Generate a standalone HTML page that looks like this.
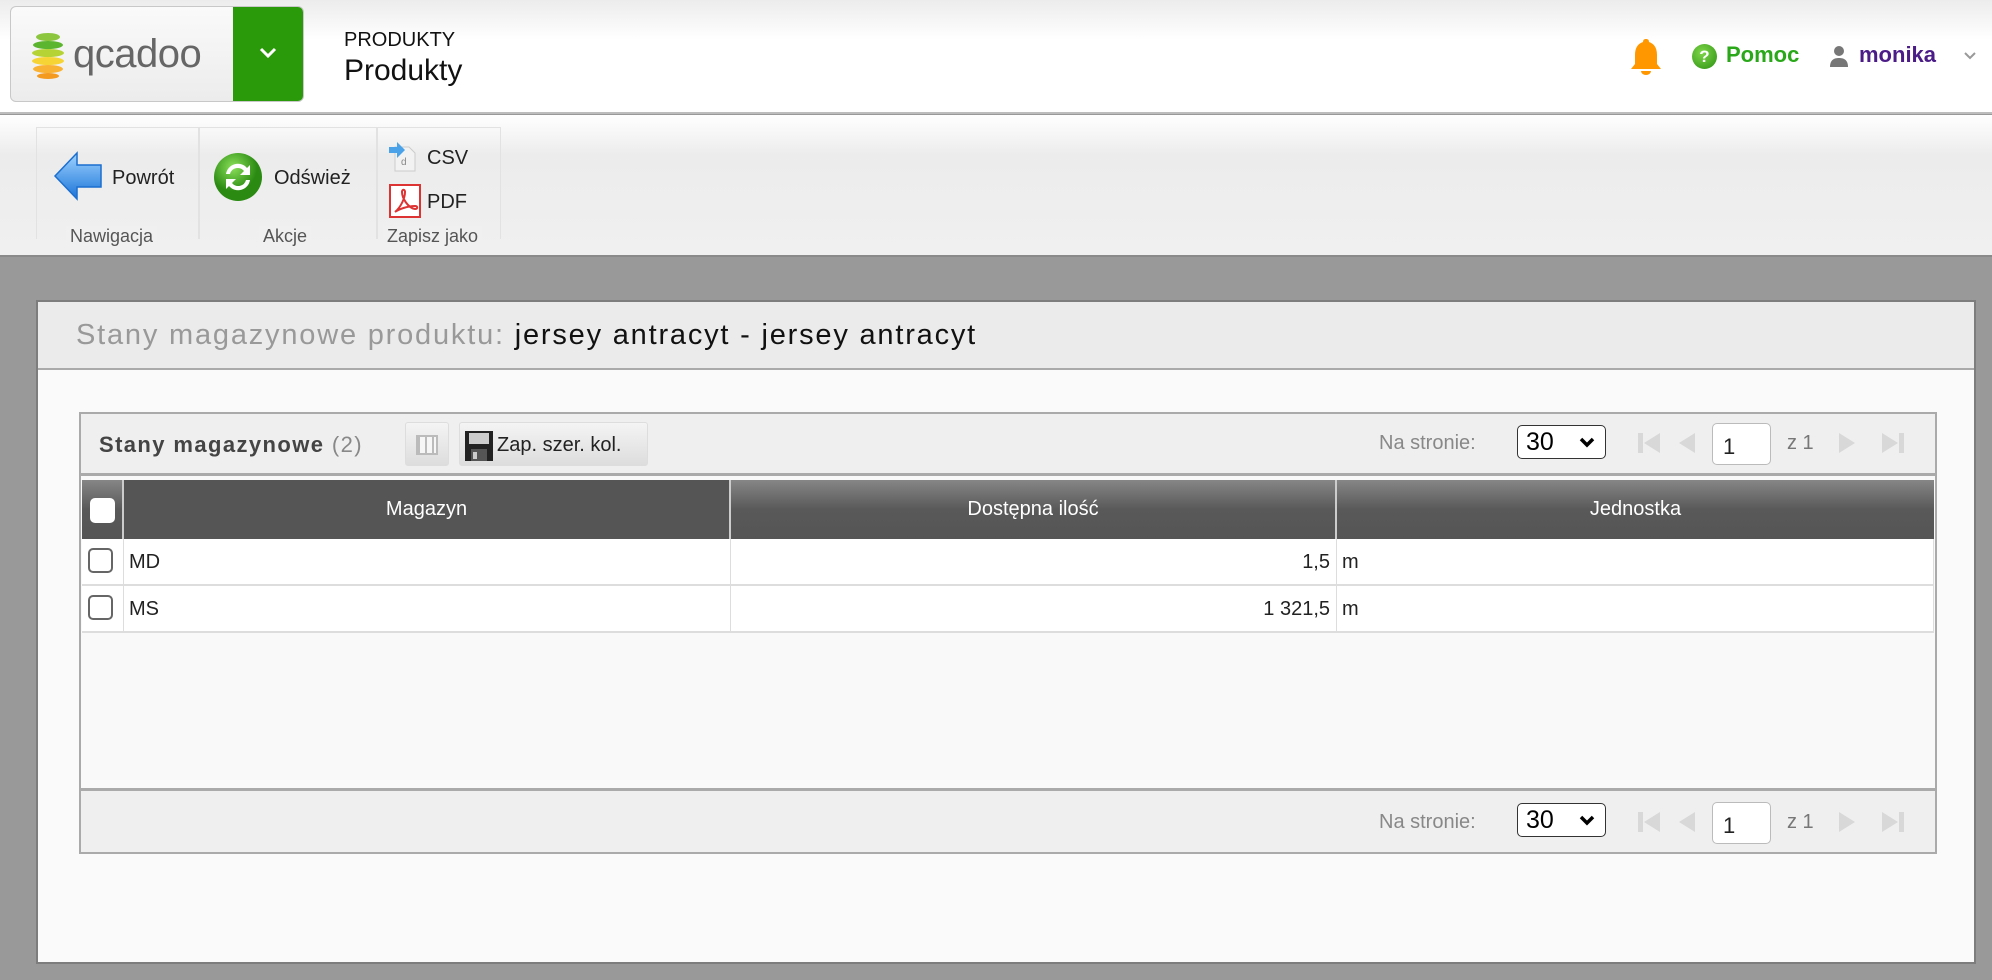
<!DOCTYPE html>
<html><head><meta charset="utf-8"><style>
*{box-sizing:border-box;margin:0;padding:0}
body{width:1992px;height:980px;overflow:hidden;font-family:"Liberation Sans",sans-serif;background:#999;position:relative}
.abs{position:absolute}
#hdr{left:0;top:0;width:1992px;height:114px;background:linear-gradient(#ececec,#fff 40px);border-bottom:2px solid #bdbdbd}
#logo{left:10px;top:6px;width:294px;height:96px;border:1px solid #c8c8c8;border-radius:6px;background:linear-gradient(#fafafa,#ececec);overflow:hidden}
#logo .g{position:absolute;right:0;top:0;width:70px;height:100%;background:#2a9a0a}
#tb{left:0;top:115px;width:1992px;height:140px;background:linear-gradient(#fff,#ececec 40px,#f0f0f0)}
.grp{position:absolute;top:12px;height:112px;border:1px solid #e2e2e2;border-bottom:none}
.lbl{position:absolute;top:111px;font-size:18px;color:#555;background:#f0f0f0;padding:0 4px}
.btxt{font-size:20px;color:#222}
#panel{left:36px;top:300px;width:1940px;height:664px;background:#fafafa;border:2px solid #7d7d7d}
#ph{left:0;top:0;width:100%;height:68px;background:#ebebeb;border-bottom:2px solid #aaa}
#grid{left:41px;top:110px;width:1858px;height:442px;border:2px solid #aaa;background:#f9f9f9}
.bar{position:absolute;left:0;width:100%;height:62px;background:#efefef}
.th{position:absolute;top:0;height:59px;background:linear-gradient(#868686,#595959 50%,#555);color:#fff;font-size:20px;text-align:center;line-height:59px;border-right:2px solid #ccc}
.cell{position:absolute;height:47px;border-right:1px solid #ddd;border-bottom:2px solid #ddd;background:#fff;font-size:20px;line-height:47px;color:#222}
.cb{position:absolute;width:25px;height:25px;border:2px solid #666;border-radius:5px;background:#fff}
.pg{font-size:20px;color:#888}
.sel{position:absolute;width:89px;height:34px;border:1px solid #333;border-radius:5px;background:#fff;font-size:25px;color:#000;padding-left:8px;line-height:32px}
.inp{position:absolute;width:59px;height:42px;border:1px solid #bbb;border-radius:5px;background:#fff;font-size:22px;padding:10px 0 0 10px;color:#222}
</style></head><body>
<div id="hdr" class="abs">
 <div id="logo" class="abs">
  <svg class="abs" style="left:20px;top:24px" width="34" height="48" viewBox="0 0 34 48">
   <ellipse cx="17" cy="6" rx="12" ry="4" fill="#8cc63f"/><ellipse cx="17" cy="14" rx="15" ry="4" fill="#5bb52e"/><ellipse cx="17" cy="22" rx="16" ry="4" fill="#b5d335"/><ellipse cx="17" cy="30" rx="16" ry="4" fill="#f7d436"/><ellipse cx="17" cy="38" rx="15" ry="4" fill="#f9b233"/><ellipse cx="17" cy="45" rx="11" ry="3" fill="#f39a1f"/>
  </svg>
  <div class="abs" style="left:62px;top:25px;font-size:40px;color:#666;letter-spacing:-0.5px">qcadoo</div>
  <div class="g"><svg class="abs" style="left:26px;top:40px" width="18" height="12" viewBox="0 0 18 12"><path d="M2 2l7 7 7-7" stroke="#fff" stroke-width="3" fill="none"/></svg></div>
 </div>
 <div class="abs" style="left:344px;top:29px;font-size:20px;color:#111">PRODUKTY</div>
 <div class="abs" style="left:344px;top:54px;font-size:30px;color:#111">Produkty</div>
 <svg class="abs" style="left:1629px;top:37px" width="34" height="40" viewBox="0 0 34 40"><path d="M17 2c-2 0-3 1-3 3C8 7 6 12 6 18v9l-4 5h30l-4-5v-9c0-6-2-11-8-13 0-2-1-3-3-3z" fill="#ff9800"/><path d="M12 34h10a5 4 0 0 1-10 0z" fill="#ff9800"/></svg>
 <div class="abs" style="left:1692px;top:44px;width:25px;height:25px;border-radius:50%;background:radial-gradient(circle at 40% 35%,#7fd64a,#2a8f10);color:#fff;font-size:17px;font-weight:bold;text-align:center;line-height:25px">?</div>
 <div class="abs" style="left:1726px;top:42px;font-size:22px;font-weight:bold;color:#2aa81a">Pomoc</div>
 <svg class="abs" style="left:1829px;top:45px" width="20" height="22" viewBox="0 0 20 22"><circle cx="10" cy="6" r="5" fill="#777"/><path d="M1 22c0-7 4-9 9-9s9 2 9 9z" fill="#777"/></svg>
 <div class="abs" style="left:1859px;top:42px;font-size:22px;font-weight:bold;color:#4b1c87">monika</div>
 <svg class="abs" style="left:1964px;top:52px" width="12" height="8" viewBox="0 0 12 8"><path d="M1 1l5 5 5-5" stroke="#999" stroke-width="2" fill="none"/></svg>
</div>
<div id="tb" class="abs">
 <div class="grp" style="left:36px;width:163px"></div>
 <div class="lbl" style="left:66px">Nawigacja</div>
 <div class="grp" style="left:199px;width:178px"></div>
 <div class="lbl" style="left:259px">Akcje</div>
 <div class="grp" style="left:377px;width:124px"></div>
 <div class="lbl" style="left:383px">Zapisz jako</div>
 <svg class="abs" style="left:53px;top:36px" width="50" height="50" viewBox="0 0 50 50"><defs><linearGradient id="ab" x1="0" y1="0" x2="0" y2="1"><stop offset="0" stop-color="#9fd3ff"/><stop offset="1" stop-color="#1a73d8"/></linearGradient></defs><path d="M2 25L24 2v12h24v22H24v12z" fill="url(#ab)" stroke="#1b6fd0" stroke-width="1.5"/></svg>
 <div class="abs btxt" style="left:112px;top:52px">Powrót</div>
 <svg class="abs" style="left:213px;top:37px" width="50" height="50" viewBox="0 0 50 50"><defs><radialGradient id="gg" cx=".4" cy=".3"><stop offset="0" stop-color="#8be05a"/><stop offset="1" stop-color="#2a8a12"/></radialGradient></defs><circle cx="25" cy="25" r="24" fill="url(#gg)"/><path d="M13 22a12 12 0 0 1 21-6l3-3v10H27l4-4a8 8 0 0 0-14 3z M37 28a12 12 0 0 1-21 6l-3 3V27h10l-4 4a8 8 0 0 0 14-3z" fill="#fff"/></svg>
 <div class="abs btxt" style="left:274px;top:52px">Odśwież</div>
 <svg class="abs" style="left:389px;top:26px" width="30" height="32" viewBox="0 0 30 32"><path d="M6 6h14l6 6v18H6z" fill="#f2f2f2" stroke="#ccc"/><text x="12" y="24" font-size="10" fill="#888" font-family="Liberation Sans">d</text><path d="M0 6h8V1l8 8-8 8v-5H0z" fill="#4aa3e8"/></svg>
 <div class="abs btxt" style="left:427px;top:32px">CSV</div>
 <svg class="abs" style="left:389px;top:69px" width="32" height="34" viewBox="0 0 32 34"><rect x="1" y="1" width="30" height="32" fill="#fff" stroke="#d33" stroke-width="2"/><path d="M6 28c6-5 10-14 10-20 0-3-3-3-3 0 0 6 6 16 13 17 3 0 3-3 0-3-7 0-16 3-20 6z" fill="none" stroke="#d33" stroke-width="2"/></svg>
 <div class="abs btxt" style="left:427px;top:76px">PDF</div>
</div>
<div class="abs" style="left:0;top:255px;width:1992px;height:2px;background:#8a8a8a"></div>
<div id="panel" class="abs">
 <div id="ph" class="abs"><div class="abs" style="left:38px;top:17px;font-size:29px;color:#999;white-space:nowrap;letter-spacing:1.8px">Stany magazynowe produktu: <span style="color:#111">jersey antracyt - jersey antracyt</span></div></div>
 <div id="grid" class="abs">
  <div class="bar" style="top:0;border-bottom:3px solid #aaa">
   <div class="abs" style="left:18px;top:18px;font-size:22px;font-weight:bold;color:#444;letter-spacing:1.4px">Stany magazynowe <span style="font-weight:normal;color:#888">(2)</span></div>
   <div class="abs" style="left:324px;top:8px;width:44px;height:44px;border:1px solid #ddd;border-radius:3px;background:linear-gradient(#f4f4f4,#ddd)"><div class="abs" style="left:10px;top:12px;width:22px;height:20px;border:2px solid #bbb;background:repeating-linear-gradient(90deg,#bbb 0 2px,#f6f6f6 2px 7px)"></div></div>
   <div class="abs" style="left:378px;top:8px;width:189px;height:44px;border:1px solid #ddd;border-radius:3px;background:linear-gradient(#f4f4f4,#ddd)">
    <svg class="abs" style="left:5px;top:8px" width="28" height="30" viewBox="0 0 28 30"><rect width="28" height="30" fill="#222"/><rect x="4" y="2" width="20" height="11" fill="#ccc"/><rect x="6" y="18" width="16" height="12" fill="#555"/><rect x="8" y="21" width="4" height="7" fill="#ccc"/></svg>
    <div class="abs" style="left:37px;top:11px;font-size:20px;color:#222">Zap. szer. kol.</div>
   </div>
   <div class="abs pg" style="left:1298px;top:18px">Na stronie:</div>
   <div class="sel" style="left:1436px;top:11px">30 <svg style="position:absolute;right:10px;top:11px" width="16" height="11" viewBox="0 0 16 11"><path d="M2 2l6 6 6-6" stroke="#000" stroke-width="3.5" fill="none"/></svg></div>
   <svg class="abs" style="left:1555px;top:17px" width="32" height="24" viewBox="0 0 32 24"><rect x="2" y="2" width="5" height="20" fill="#d8d8d8"/><path d="M24 2v20L8 12z" fill="#d8d8d8"/></svg>
   <svg class="abs" style="left:1594px;top:17px" width="24" height="24" viewBox="0 0 24 24"><path d="M20 2v20L4 12z" fill="#d8d8d8"/></svg>
   <div class="inp" style="left:1631px;top:9px">1</div>
   <div class="abs pg" style="left:1706px;top:18px;color:#777">z 1</div>
   <svg class="abs" style="left:1754px;top:17px" width="24" height="24" viewBox="0 0 24 24"><path d="M4 2v20l16-10z" fill="#d8d8d8"/></svg>
   <svg class="abs" style="left:1795px;top:17px" width="32" height="24" viewBox="0 0 32 24"><path d="M6 2v20l16-10z" fill="#d8d8d8"/><rect x="23" y="2" width="5" height="20" fill="#d8d8d8"/></svg>
  </div>
  <div class="abs" style="left:1px;top:66px;width:1852px">
   <div class="th" style="left:0;width:42px"><div class="cb" style="left:8px;top:18px;border-color:#fff"></div></div>
   <div class="th" style="left:42px;width:607px;background:#555">Magazyn</div>
   <div class="th" style="left:649px;width:606px">Dostępna ilość</div>
   <div class="th" style="left:1255px;width:597px;border-right:none">Jednostka</div>
   <div class="cell" style="left:0;top:59px;width:42px"><div class="cb" style="left:6px;top:9px"></div></div>
   <div class="cell" style="left:42px;top:59px;width:607px;padding-left:5px">MD</div>
   <div class="cell" style="left:649px;top:59px;width:606px;text-align:right;padding-right:6px">1,5</div>
   <div class="cell" style="left:1255px;top:59px;width:597px;padding-left:5px">m</div>
   <div class="cell" style="left:0;top:106px;width:42px"><div class="cb" style="left:6px;top:9px"></div></div>
   <div class="cell" style="left:42px;top:106px;width:607px;padding-left:5px">MS</div>
   <div class="cell" style="left:649px;top:106px;width:606px;text-align:right;padding-right:6px">1 321,5</div>
   <div class="cell" style="left:1255px;top:106px;width:597px;padding-left:5px">m</div>
  </div>
  <div class="bar" style="top:374px;height:64px;border-top:3px solid #aaa">
   <div class="abs pg" style="left:1298px;top:20px">Na stronie:</div>
   <div class="sel" style="left:1436px;top:12px">30 <svg style="position:absolute;right:10px;top:11px" width="16" height="11" viewBox="0 0 16 11"><path d="M2 2l6 6 6-6" stroke="#000" stroke-width="3.5" fill="none"/></svg></div>
   <svg class="abs" style="left:1555px;top:19px" width="32" height="24" viewBox="0 0 32 24"><rect x="2" y="2" width="5" height="20" fill="#d8d8d8"/><path d="M24 2v20L8 12z" fill="#d8d8d8"/></svg>
   <svg class="abs" style="left:1594px;top:19px" width="24" height="24" viewBox="0 0 24 24"><path d="M20 2v20L4 12z" fill="#d8d8d8"/></svg>
   <div class="inp" style="left:1631px;top:11px">1</div>
   <div class="abs pg" style="left:1706px;top:20px;color:#777">z 1</div>
   <svg class="abs" style="left:1754px;top:19px" width="24" height="24" viewBox="0 0 24 24"><path d="M4 2v20l16-10z" fill="#d8d8d8"/></svg>
   <svg class="abs" style="left:1795px;top:19px" width="32" height="24" viewBox="0 0 32 24"><path d="M6 2v20l16-10z" fill="#d8d8d8"/><rect x="23" y="2" width="5" height="20" fill="#d8d8d8"/></svg>
  </div>
 </div>
</div>
</body></html>
